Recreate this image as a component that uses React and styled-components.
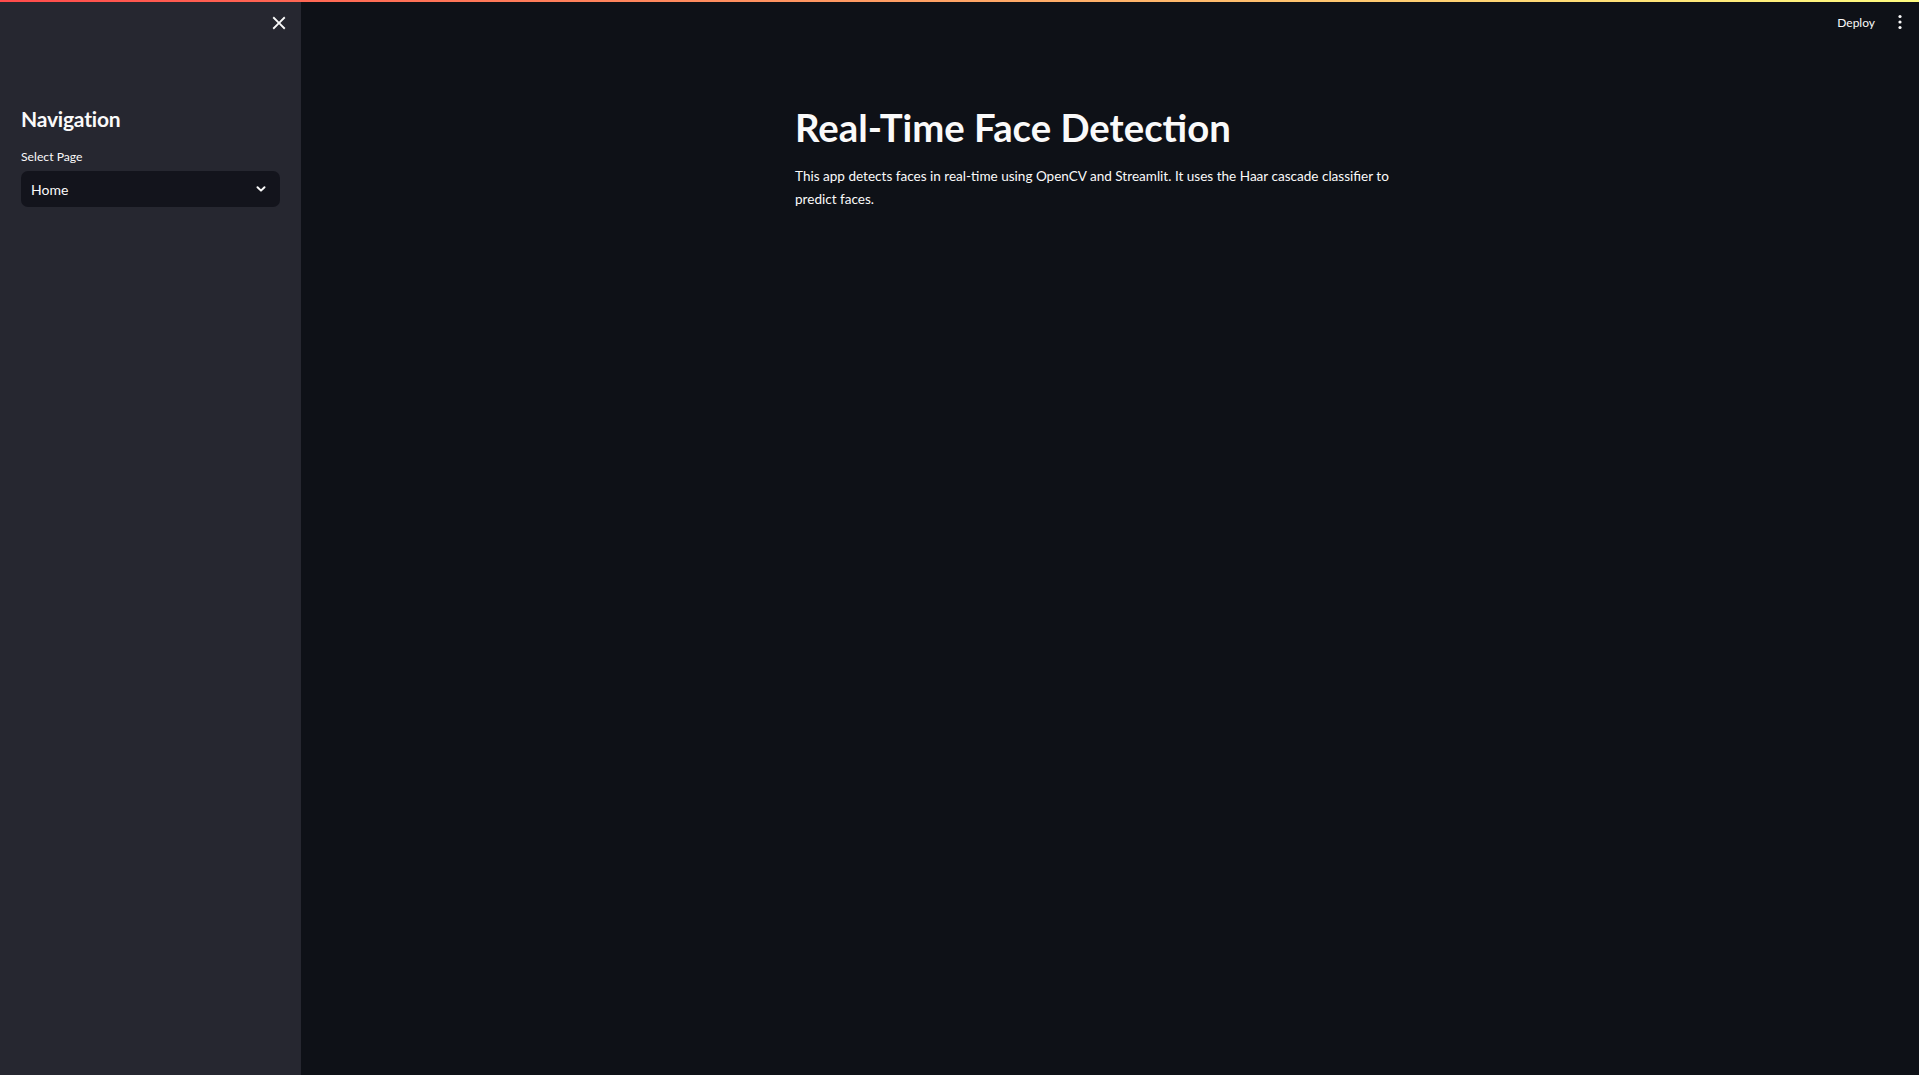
import React from "react";
import styled, { createGlobalStyle } from "styled-components";

const Global = createGlobalStyle`
  html, body { margin: 0; padding: 0; background: #0e1117; }
  body { font-family: Lato, "Noto Sans", sans-serif; color: #fafafa; }
  * { box-sizing: border-box; }
`;

const Shell = styled.div`
  display: flex;
  flex-direction: column;
  height: 100vh;
  overflow: hidden;
`;

const Decoration = styled.div`
  height: 2px;
  flex: none;
  background: linear-gradient(90deg, rgb(255, 75, 75), rgb(255, 253, 128));
`;

const Body = styled.div`
  flex: 1;
  display: flex;
  min-height: 0;
`;

const Sidebar = styled.aside`
  width: 301px;
  flex: none;
  background: #262730;
  display: flex;
  flex-direction: column;
  padding: 0 21px;
`;

const SidebarTop = styled.div`
  height: 42px;
  display: flex;
  align-items: center;
  justify-content: flex-end;
  margin-right: -10px;
`;

const IconButton = styled.button`
  width: 22px;
  height: 22px;
  padding: 0;
  border: none;
  background: transparent;
  color: #fafafa;
  display: flex;
  align-items: center;
  justify-content: center;
  cursor: pointer;
`;

const SideTitle = styled.h1`
  margin: 62px 0 0;
  font-size: 21px;
  font-weight: 700;
  line-height: 1.2;
  letter-spacing: -0.2px;
`;

const Label = styled.label`
  display: block;
  margin-top: 17px;
  font-size: 12.2px;
  line-height: 1.4;
`;

const Select = styled.div`
  margin-top: 6px;
  height: 36px;
  border-radius: 7px;
  background: #13141c;
  display: flex;
  align-items: center;
  justify-content: space-between;
  padding: 0 13px 0 10px;
  font-size: 14px;
`;

const Main = styled.main`
  flex: 1;
  display: flex;
  flex-direction: column;
  background: #0e1117;
  min-width: 0;
`;

const Header = styled.header`
  height: 40px;
  display: flex;
  align-items: center;
  justify-content: flex-end;
  gap: 22px;
  padding-right: 16px;
`;

const DeployText = styled.span`
  font-size: 12px;
  color: #fafafa;
`;

const Container = styled.div`
  width: 630px;
  margin: 0 auto;
  padding-top: 63px;
`;

const Title = styled.h1`
  margin: 0;
  font-size: 38.3px;
  font-weight: 700;
  line-height: 1.2;
`;

const Para = styled.p`
  margin: 14px 0 0;
  font-size: 13.55px;
  line-height: 23px;
`;

const CloseIcon = () => (
  <svg width="22" height="22" viewBox="0 0 24 24" fill="currentColor">
    <path d="M19 6.41L17.59 5 12 10.59 6.41 5 5 6.41 10.59 12 5 17.59 6.41 19 12 13.41 17.59 19 19 17.59 13.41 12z" />
  </svg>
);

const Chevron = () => (
  <svg width="12" height="12" viewBox="0 0 12 12" fill="none" stroke="#fafafa" strokeWidth="2" strokeLinecap="round" strokeLinejoin="round">
    <path d="M2.5 4.2 L6 7.6 L9.5 4.2" />
  </svg>
);

const Dots = () => (
  <svg width="6" height="16" viewBox="0 0 6 16" fill="#fafafa">
    <circle cx="3" cy="2.5" r="1.6" />
    <circle cx="3" cy="8" r="1.6" />
    <circle cx="3" cy="13.5" r="1.6" />
  </svg>
);

export default function App() {
  return (
    <>
      <Global />
      <Shell>
        <Decoration />
        <Body>
          <Sidebar>
            <SidebarTop>
              <IconButton aria-label="Close sidebar"><CloseIcon /></IconButton>
            </SidebarTop>
            <SideTitle>Navigation</SideTitle>
            <Label>Select Page</Label>
            <Select>
              <span>Home</span>
              <Chevron />
            </Select>
          </Sidebar>
          <Main>
            <Header>
              <DeployText>Deploy</DeployText>
              <Dots />
            </Header>
            <Container>
              <Title>Real-Time Face Detection</Title>
              <Para>
                This app detects faces in real-time using OpenCV and Streamlit. It uses the Haar cascade classifier to predict faces.
              </Para>
            </Container>
          </Main>
        </Body>
      </Shell>
    </>
  );
}
